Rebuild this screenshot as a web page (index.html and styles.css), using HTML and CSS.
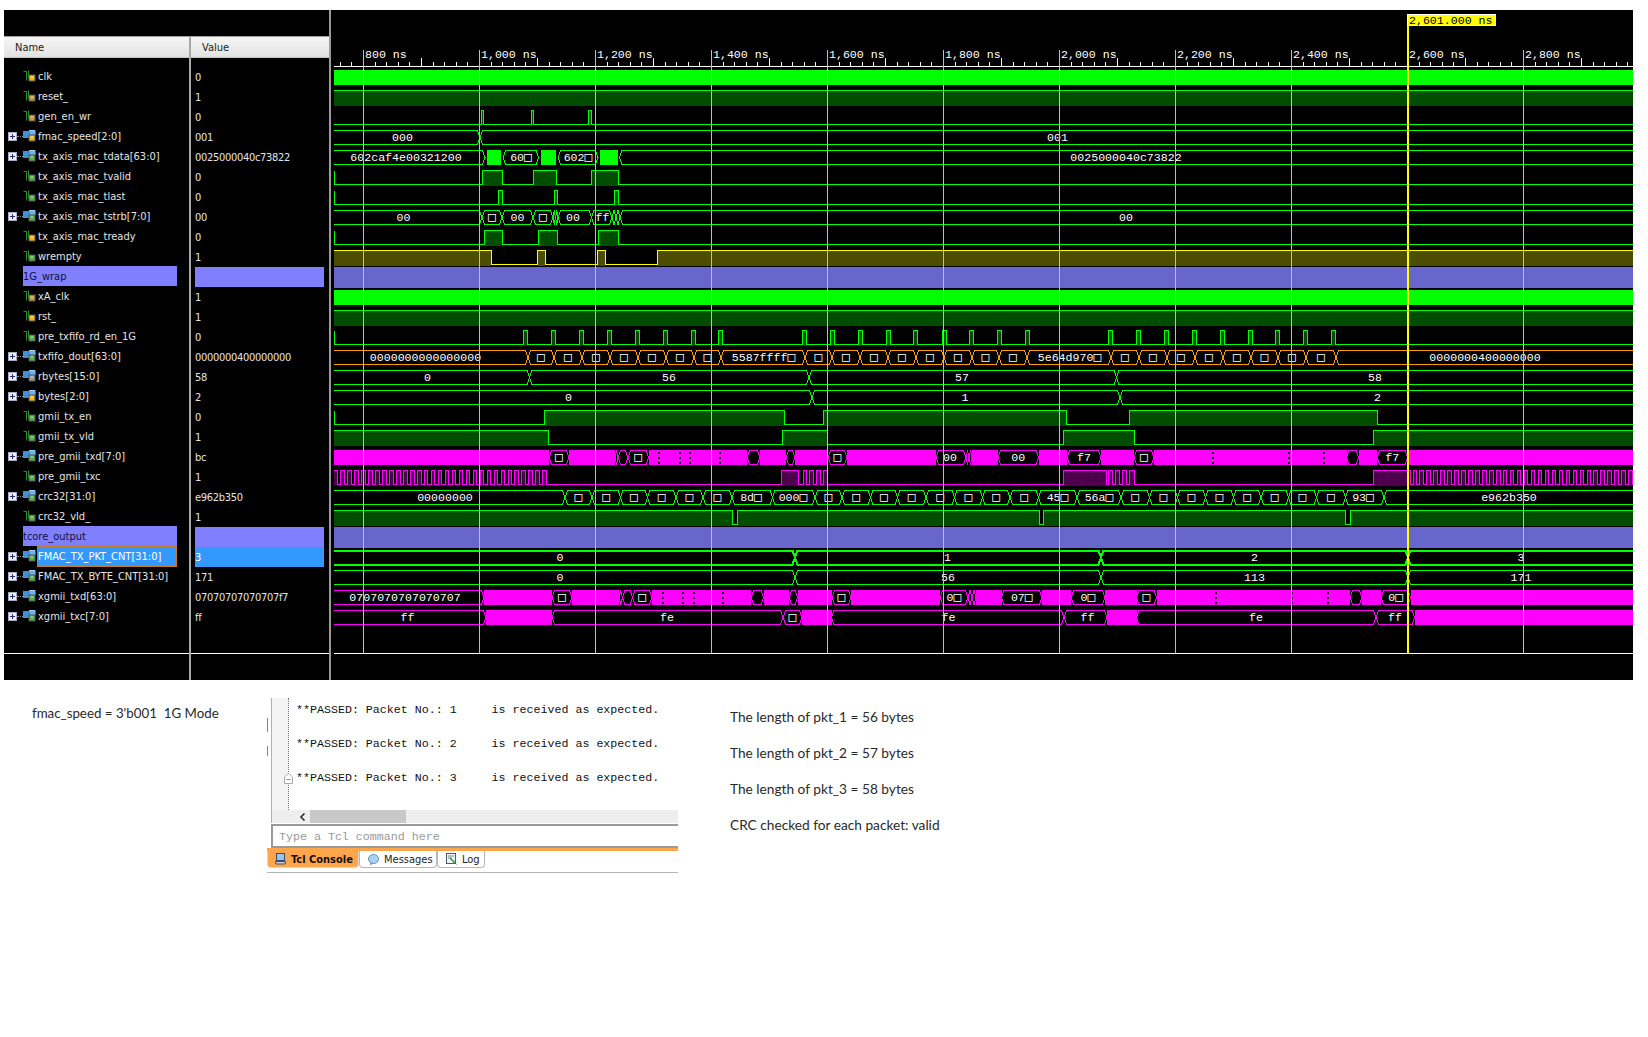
FILE: index.html
```html
<!DOCTYPE html>
<html lang="en">
<head>
    <meta charset="UTF-8">
    <meta name="viewport" content="width=device-width, initial-scale=1.0">
    <title>Waveform - FMAC 1G Mode</title>
    <link rel="stylesheet" href="styles.css">
</head>
<body>
    <svg class="icon-defs" width="0" height="0" aria-hidden="true">
        <symbol id="wire" viewBox="0 0 13 12">
            <path d="M0.5 1.5H3.5V10.5M5.5 0.5V8.5" fill="none" stroke="#2f8f2f"/>
            <rect x="6" y="5" width="6" height="6" fill="currentColor" stroke="#555"/>
            <rect x="7.5" y="6.5" width="3" height="1" fill="#fff" opacity="0.6"/>
        </symbol>
        <symbol id="bus" viewBox="0 0 13 12">
            <rect x="0" y="1" width="7" height="7" fill="#3f8fdc"/>
            <path d="M6 0.5H12V5" fill="none" stroke="#9fd0f5"/>
            <rect x="7" y="1" width="5" height="4" fill="#6cb2ee"/>
            <rect x="6" y="5" width="6" height="6" fill="currentColor" stroke="#555"/>
            <rect x="7.5" y="6.5" width="3" height="1" fill="#fff" opacity="0.6"/>
        </symbol>
        <symbol id="plus-box" viewBox="0 0 9 9">
            <rect x="0.5" y="0.5" width="8" height="8" fill="#ecf0f6" stroke="#aab"/>
            <path d="M2 4.5H7M4.5 2V7" stroke="#1c2f78"/>
        </symbol>
    </svg>

    <div class="wave-window">
        <div class="signal-side">
            <div class="side-top"></div>
            <div class="side-body">
                <div class="name-pane">
                    <div class="pane-head">Name</div>
                    <div class="pane-rows">
                        <div class="sig"><svg class="ico lock-y"><use href="#wire"/></svg><span>clk</span></div>
                        <div class="sig"><svg class="ico lock-o"><use href="#wire"/></svg><span>reset_</span></div>
                        <div class="sig"><svg class="ico lock-o"><use href="#wire"/></svg><span>gen_en_wr</span></div>
                        <div class="sig bus"><svg class="plus"><use href="#plus-box"/></svg><i class="dots"></i><svg class="ico lock-y"><use href="#bus"/></svg><span>fmac_speed[2:0]</span></div>
                        <div class="sig bus"><svg class="plus"><use href="#plus-box"/></svg><i class="dots"></i><svg class="ico lock-g"><use href="#bus"/></svg><span>tx_axis_mac_tdata[63:0]</span></div>
                        <div class="sig"><svg class="ico lock-g"><use href="#wire"/></svg><span>tx_axis_mac_tvalid</span></div>
                        <div class="sig"><svg class="ico lock-g"><use href="#wire"/></svg><span>tx_axis_mac_tlast</span></div>
                        <div class="sig bus"><svg class="plus"><use href="#plus-box"/></svg><i class="dots"></i><svg class="ico lock-g"><use href="#bus"/></svg><span>tx_axis_mac_tstrb[7:0]</span></div>
                        <div class="sig"><svg class="ico lock-y"><use href="#wire"/></svg><span>tx_axis_mac_tready</span></div>
                        <div class="sig"><svg class="ico lock-g"><use href="#wire"/></svg><span>wrempty</span></div>
                        <div class="sig group"><span>1G_wrap</span></div>
                        <div class="sig"><svg class="ico lock-o"><use href="#wire"/></svg><span>xA_clk</span></div>
                        <div class="sig"><svg class="ico lock-y"><use href="#wire"/></svg><span>rst_</span></div>
                        <div class="sig"><svg class="ico lock-g"><use href="#wire"/></svg><span>pre_txfifo_rd_en_1G</span></div>
                        <div class="sig bus"><svg class="plus"><use href="#plus-box"/></svg><i class="dots"></i><svg class="ico lock-g"><use href="#bus"/></svg><span>txfifo_dout[63:0]</span></div>
                        <div class="sig bus"><svg class="plus"><use href="#plus-box"/></svg><i class="dots"></i><svg class="ico lock-s"><use href="#bus"/></svg><span>rbytes[15:0]</span></div>
                        <div class="sig bus"><svg class="plus"><use href="#plus-box"/></svg><i class="dots"></i><svg class="ico lock-y"><use href="#bus"/></svg><span>bytes[2:0]</span></div>
                        <div class="sig"><svg class="ico lock-g"><use href="#wire"/></svg><span>gmii_tx_en</span></div>
                        <div class="sig"><svg class="ico lock-g"><use href="#wire"/></svg><span>gmii_tx_vld</span></div>
                        <div class="sig bus"><svg class="plus"><use href="#plus-box"/></svg><i class="dots"></i><svg class="ico lock-g"><use href="#bus"/></svg><span>pre_gmii_txd[7:0]</span></div>
                        <div class="sig"><svg class="ico lock-g"><use href="#wire"/></svg><span>pre_gmii_txc</span></div>
                        <div class="sig bus"><svg class="plus"><use href="#plus-box"/></svg><i class="dots"></i><svg class="ico lock-g"><use href="#bus"/></svg><span>crc32[31:0]</span></div>
                        <div class="sig"><svg class="ico lock-g"><use href="#wire"/></svg><span>crc32_vld_</span></div>
                        <div class="sig group"><span>tcore_output</span></div>
                        <div class="sig bus selected"><svg class="plus"><use href="#plus-box"/></svg><i class="dots"></i><svg class="ico lock-g"><use href="#bus"/></svg><span>FMAC_TX_PKT_CNT[31:0]</span></div>
                        <div class="sig bus"><svg class="plus"><use href="#plus-box"/></svg><i class="dots"></i><svg class="ico lock-g"><use href="#bus"/></svg><span>FMAC_TX_BYTE_CNT[31:0]</span></div>
                        <div class="sig bus"><svg class="plus"><use href="#plus-box"/></svg><i class="dots"></i><svg class="ico lock-g"><use href="#bus"/></svg><span>xgmii_txd[63:0]</span></div>
                        <div class="sig bus"><svg class="plus"><use href="#plus-box"/></svg><i class="dots"></i><svg class="ico lock-g"><use href="#bus"/></svg><span>xgmii_txc[7:0]</span></div>
                    </div>
                    <div class="pane-foot"></div>
                </div>
                <div class="value-pane">
                    <div class="pane-head">Value</div>
                    <div class="pane-rows">
                        <div class="val">0</div>
                        <div class="val">1</div>
                        <div class="val">0</div>
                        <div class="val">001</div>
                        <div class="val">0025000040c73822</div>
                        <div class="val">0</div>
                        <div class="val">0</div>
                        <div class="val">00</div>
                        <div class="val">0</div>
                        <div class="val">1</div>
                        <div class="val group"></div>
                        <div class="val">1</div>
                        <div class="val">1</div>
                        <div class="val">0</div>
                        <div class="val">0000000400000000</div>
                        <div class="val">58</div>
                        <div class="val">2</div>
                        <div class="val">0</div>
                        <div class="val">1</div>
                        <div class="val">bc</div>
                        <div class="val">1</div>
                        <div class="val">e962b350</div>
                        <div class="val">1</div>
                        <div class="val group"></div>
                        <div class="val selected">3</div>
                        <div class="val">171</div>
                        <div class="val">07070707070707f7</div>
                        <div class="val">ff</div>
                    </div>
                    <div class="pane-foot"></div>
                </div>
            </div>
        </div>
        <div class="sash"></div>
        <svg id="waves" class="wave-pane" viewBox="334 10 1299 670" width="1299" height="670"></svg>
    </div>

    <div class="below">
        <p class="speed-note">fmac_speed = 3'b001&nbsp; 1G Mode</p>

        <div class="console">
            <div class="console-body">
                <div class="gutter-marks"><i></i><i></i></div>
                <div class="gutter-fold">
                    <svg class="fold-mark" width="9" height="11" viewBox="0 0 9 11"><path d="M0.5 4L4.5 0.5L8.5 4V10.5H0.5Z" fill="#fff" stroke="#aaa"/><path d="M2.5 6.5H6.5" stroke="#888"/></svg>
                </div>
                <div class="console-lines">
                    <p>**PASSED: Packet No.: 1     is received as expected.</p>
                    <p>**PASSED: Packet No.: 2     is received as expected.</p>
                    <p>**PASSED: Packet No.: 3     is received as expected.</p>
                </div>
            </div>
            <div class="scrollbar">
                <div class="scroll-left"><svg width="6" height="8" viewBox="0 0 6 8"><path d="M4.5 0.5L1 4L4.5 7.5" fill="none" stroke="#333" stroke-width="1.6"/></svg></div>
                <div class="scroll-thumb"></div>
            </div>
            <div class="tcl-input">Type a Tcl command here</div>
            <div class="tabs">
                <div class="tab active">
                    <svg width="11" height="12" viewBox="0 0 11 12"><rect x="1.5" y="0.5" width="8" height="7" fill="#9cc4ea" stroke="#35506e"/><path d="M0.5 8.5H10.5L10 11H1Z" fill="#c9d3dd" stroke="#35506e"/></svg>
                    <span>Tcl Console</span>
                </div>
                <div class="tab tab-messages">
                    <svg width="11" height="11" viewBox="0 0 11 11"><ellipse cx="5.5" cy="5" rx="5" ry="4.5" fill="#a9d3f5" stroke="#5d8fc4"/><path d="M3 9L2.5 10.5L5 9.3" fill="#a9d3f5" stroke="#5d8fc4"/></svg>
                    <span>Messages</span>
                </div>
                <div class="tab tab-log">
                    <svg width="11" height="12" viewBox="0 0 11 12"><rect x="0.5" y="0.5" width="9" height="10" fill="#eef2f7" stroke="#4a5a70"/><path d="M2 3H8M2 5H6" stroke="#7a8aa0"/><path d="M4 5L9 10" stroke="#2f9e2f" stroke-width="1.6"/><path d="M9 10L10.5 11.5" stroke="#d0342c"/></svg>
                    <span>Log</span>
                </div>
            </div>
        </div>

        <div class="results">
            <p>The length of pkt_1 = 56 bytes</p>
            <p>The length of pkt_2 = 57 bytes</p>
            <p>The length of pkt_3 = 58 bytes</p>
            <p>CRC checked for each packet: valid</p>
        </div>
    </div>

    <script src="script.js"></script>
</body>
</html>
```

FILE: styles.css
```css
body {
    margin: 0;
    padding: 10px 15px 0 4px;
    background-color: #fff;
    font-family: "DejaVu Sans Condensed", "DejaVu Sans", sans-serif;
    font-stretch: condensed;
}
.icon-defs {
    position: absolute;
}
.wave-window {
    display: flex;
    height: 670px;
    background: #000;
}
.signal-side {
    width: 325px;
}
.side-top {
    height: 26px;
}
.side-body {
    display: flex;
}
.name-pane {
    width: 185px;
    border-right: 2px solid #a8a8a8;
}
.value-pane {
    width: 138px;
}
.sash {
    width: 2px;
    margin-right: 3px;
    background: #9a9a9a;
}
.wave-pane {
    display: block;
    shape-rendering: crispEdges;
}
.pane-head {
    height: 20px;
    padding-left: 11px;
    border-top: 1px solid #a0a0a0;
    border-bottom: 1px solid #c4c4c4;
    background: linear-gradient(#f6f6f6, #e2e2e2);
    color: #222;
    font-size: 11px;
    line-height: 22px;
}
.pane-rows {
    margin-top: 8px;
}
.pane-foot {
    height: 26px;
    margin-top: 27px;
    border-top: 1px solid #fff;
}

.sig, .val {
    display: flex;
    align-items: center;
    height: 20px;
    color: #e4e4e4;
    font-size: 11px;
    white-space: nowrap;
}
.sig {
    padding-left: 19px;
    width: 154px;
}
.sig span {
    margin-left: 2px;
}
.ico {
    width: 13px;
    height: 12px;
    margin-top: -1px;
    flex: none;
}
.plus {
    width: 9px;
    height: 9px;
    margin-left: -15px;
    flex: none;
}
.dots {
    width: 6px;
    border-top: 1px dotted #888;
    flex: none;
}
.lock-y { color: #f2b61c; }
.lock-o { color: #c79a3a; }
.lock-g { color: #55b24a; }
.lock-s { color: #9a9a9a; }
.sig.group {
    padding-left: 0;
    margin-left: 19px;
    width: 154px;
    background: #8080ff;
    color: #101040;
}
.sig.group span {
    margin-left: 0;
}
.sig.selected span {
    flex: 1;
    height: 19px;
    margin-left: 1px;
    line-height: 19px;
    background: #3399ff;
    color: #fff;
    border: 1px dotted #c87a20;
}
.val {
    margin-left: 4px;
    width: 129px;
    position: relative;
    top: 1px;
    letter-spacing: -0.3px;
}
.val.group {
    background: #8080ff;
}
.val.selected {
    background: #3399ff;
    color: #fff;
}

.wave-label, .ruler-label, .cursor-label {
    font: 11.6px "Liberation Mono", "DejaVu Sans Mono", monospace;
}
.wave-label {
    fill: #fff;
    text-anchor: middle;
}
.ruler-label {
    fill: #fff;
}
.cursor-label {
    fill: #000;
}
.box {
    font: bold 13px "DejaVu Sans Mono", monospace;
}

.below {
    display: flex;
    align-items: flex-start;
}
.speed-note {
    width: 235px;
    margin: 23px 0 0 28px;
    color: #2a2a2a;
    font-family: Lato, sans-serif;
    font-size: 13.3px;
    line-height: 20px;
}
.console {
    width: 411px;
    margin-top: 18px;
}
.console-body {
    display: flex;
    height: 112px;
}
.gutter-marks {
    width: 4px;
}
.gutter-marks i {
    display: block;
    width: 1px;
    height: 14px;
    margin-top: 20px;
    background: #6a86c8;
}
.gutter-marks i + i {
    height: 10px;
    margin-top: 14px;
}
.gutter-fold {
    position: relative;
    width: 16px;
    border-left: 1px solid #b0b0b0;
    border-right: 1px dotted #777;
    background: #f3f3f3;
}
.fold-mark {
    position: absolute;
    top: 75px;
    right: -5px;
}
.console-lines {
    flex: 1;
    padding: 1px 0 0 7px;
}
.console-lines p {
    margin: 0 0 12px;
    color: #111;
    font: 11.65px/22px "Liberation Mono", monospace;
    white-space: pre;
}
.scrollbar {
    display: flex;
    align-items: stretch;
    height: 13px;
    margin-left: 4px;
    background: #eeeeee;
    border-left: 1px solid #b0b0b0;
}
.scroll-left {
    display: flex;
    align-items: center;
    justify-content: center;
    width: 38px;
    padding-left: 24px;
    box-sizing: border-box;
}
.scroll-thumb {
    width: 96px;
    background: #c8c8c8;
}
.tcl-input {
    height: 20px;
    margin: 1px 0 0 4px;
    padding-left: 6px;
    border: solid #9a9a9a;
    border-width: 2px 0 2px 2px;
    color: #999;
    font: 11.65px/22px "Liberation Mono", monospace;
}
.tabs {
    display: flex;
    align-items: flex-start;
    height: 21px;
    border-top: 3px solid #ffa64d;
    border-bottom: 1px solid #b4b4b4;
}
.tab {
    display: flex;
    align-items: center;
    gap: 5px;
    box-sizing: border-box;
    height: 17px;
    padding-left: 8px;
    border: 1px solid #b8b8b8;
    border-top: 0;
    border-radius: 0 0 4px 4px;
    color: #222;
    font-size: 11px;
    white-space: nowrap;
}
.tab.active {
    width: 92px;
    padding-left: 7px;
    background: #ffa64d;
    border-color: #d9d9d9;
    color: #111;
    font-weight: bold;
}
.tab-messages {
    width: 78px;
}
.tab-log {
    width: 48px;
}
.results {
    margin: 27px 0 0 52px;
    color: #2a2a2a;
    font-family: Lato, sans-serif;
    font-size: 13.7px;
}
.results p {
    margin: 0 0 16px;
    line-height: 20px;
}
```

FILE: script.js
```js
// waveform canvas, coordinates are page pixels (see viewBox on #waves)
var svg = document.getElementById('waves');
var X0 = 334, X1 = 1633;
var GREEN = '#00ff00', DK_GREEN = '#004d00';
var YEL = '#ffff00', DK_YEL = '#4d4d00';
var MAG = '#ff00ff', DK_MAG = '#4d004d';
var ORANGE = '#ff9900';

function add(tag, attrs, text) {
    var el = document.createElementNS('http://www.w3.org/2000/svg', tag);
    for (var k in attrs) el.setAttribute(k, attrs[k]);
    if (text) el.textContent = text;
    svg.appendChild(el);
    return el;
}
function hi(row) { return 70.5 + 20 * row; }
function lo(row) { return hi(row) + 14; }

function band(row) {
    add('rect', { x: X0, y: hi(row) - 0.5, width: X1 - X0, height: 15, fill: GREEN });
}
function group(row) {
    add('rect', { x: X0, y: hi(row) - 3.5, width: X1 - X0, height: 21, fill: '#6666cc' });
}

// highs = list of [from, to]; edge = draw the little start line at X0
function step(row, color, dark, highs, edge) {
    var h = hi(row), l = lo(row);
    var d = edge ? 'M' + X0 + ' ' + h + 'L' + X0 + ' ' + l : 'M' + X0 + ' ' + l;
    highs.forEach(function (s) {
        add('rect', { x: s[0], y: h, width: s[1] - s[0], height: 15.5, fill: dark });
        if (s[0] <= X0) d = 'M' + X0 + ' ' + h;
        else d += 'L' + s[0] + ' ' + l + 'L' + s[0] + ' ' + h;
        d += 'L' + s[1] + ' ' + h;
        if (s[1] < X1) d += 'L' + s[1] + ' ' + l;
    });
    var last = highs.length ? highs[highs.length - 1][1] : X0;
    if (last < X1) d += 'L' + X1 + ' ' + l;
    add('path', { d: d, fill: 'none', stroke: color });
}

// bus label, the missing-glyph box gets drawn bigger like the viewer does it
function label(row, text, x) {
    var el = add('text', { 'class': 'wave-label', x: x, y: hi(row) + 10 });
    text.split('\u25a1').forEach(function (part, i) {
        if (i > 0) {
            var box = document.createElementNS('http://www.w3.org/2000/svg', 'tspan');
            box.setAttribute('class', 'box');
            box.textContent = '\u25a1';
            el.appendChild(box);
        }
        if (part) el.appendChild(document.createTextNode(part));
    });
}

// segs = list of end | [end, label, labelCenter]; '#' is a solid stretch
function bus(row, color, segs, width, edge) {
    var h = hi(row), l = lo(row), m = h + 7, a = X0;
    if (edge) add('path', { d: 'M' + X0 + ' ' + h + 'V' + l, stroke: color });
    segs.forEach(function (s) {
        if (typeof s === 'number') s = [s, '\u25a1'];
        var b = s[0], text = s[1];
        if (text === '#' || text === '##') {
            var inset = text === '##' ? 2 : 0;
            add('rect', { x: a + inset, y: h - 0.5, width: b - a - 2 * inset, height: 15, fill: color });
        } else {
            var t = Math.min(2.5, (b - a) / 2);
            var left = a <= X0 ? [[a, h], [a, l]] : [[a + t, h], [a, m], [a + t, l]];
            var right = b >= X1 ? [[b, h], [b, l]] : [[b - t, h], [b, m], [b - t, l]];
            var pts = [left[0]].concat(right).concat(left.slice(1).reverse());
            add('polygon', { points: pts.map(String).join(' '), fill: '#000', stroke: 'none' });
            var line = 'M' + (a <= X0 ? a + ' ' + h : a + ' ' + m + 'L' + (a + t) + ' ' + h);
            line += 'L' + (b >= X1 ? b : b - t) + ' ' + h;
            if (b < X1) line += 'L' + b + ' ' + m + 'L' + (b - t) + ' ' + l; else line += 'M' + b + ' ' + l;
            line += 'L' + (a <= X0 ? a : a + t) + ' ' + l;
            if (a > X0) line += 'L' + a + ' ' + m;
            add('path', { d: line, fill: 'none', stroke: color, 'stroke-width': width || 1 });
            if (text) label(row, text, s[2] || (a + b) / 2);
        }
        a = b;
    });
}

// tiny black specks the viewer leaves in very dense stretches
function specks(row, list) {
    list.forEach(function (x) {
        [1, 6, 11].forEach(function (dy) {
            add('rect', { x: x, y: hi(row) + dy, width: 2, height: 2, fill: '#000' });
        });
    });
}

function clock(from, to, period) {
    var out = [];
    for (var x = from; x < to - 1; x += period) out.push([x, Math.min(x + period / 2, to)]);
    return out;
}
function pulses(centers) {
    return centers.map(function (c) { return [c - 2, c + 2]; });
}

band(0);
step(1, GREEN, DK_GREEN, [[X0, X1]]);
step(2, GREEN, DK_GREEN, [[481, 483], [531, 533.5], [588.5, 591]]);
bus(3, GREEN, [[480, '000', 402.5], [X1, '001', 1057.5]]);
bus(4, GREEN, [[485, '602caf4e00321200', 406], [503, '##'], [538.5, '60\u25a1', 521], [558, '##'], [598, '602\u25a1', 578], [619.5, '##'], [X1, '0025000040c73822', 1126]]);
step(5, GREEN, DK_GREEN, [[482.5, 502], [533, 556.5], [591.5, 618]], true);
step(6, GREEN, DK_GREEN, [[498.5, 502], [554.5, 557], [614, 618]], true);
bus(7, GREEN, [[482, '00', 403.5], 502, [533, '00'], 553, [555.5, ''], [558, ''], [591.5, '00', 573], [612, 'ff', 602.5], [616, ''], [620, ''], [X1, '00', 1126]]);
step(8, GREEN, DK_GREEN, [[484.5, 502], [538, 557], [598, 618]], true);
step(9, YEL, DK_YEL, [[X0, 491], [537.5, 545], [597, 605], [657, X1]]);
group(10);
band(11);
step(12, GREEN, DK_GREEN, [[X0, X1]]);
step(13, GREEN, DK_GREEN, pulses([525.5, 553.5, 581, 609, 637, 665, 693, 720.5, 804.5, 832, 860, 888, 915.5, 944, 971, 999.5, 1027, 1110.5, 1138.5, 1166.5, 1194.5, 1222.5, 1250.5, 1277.5, 1305.5, 1333.5]), true);
bus(14, ORANGE, [[528, '0000000000000000', 425.5], 554, 582, 610, 638, 666, 694, 721, [805, '5587ffff\u25a1', 763.5], 832, 860, 888, 916, 944, 972, 999, 1027, [1111, '5e64d970\u25a1', 1069.5], 1139, 1167, 1195, 1223, 1251, 1278, 1306, 1336, [X1, '0000000400000000', 1485]]);
bus(15, GREEN, [[529.5, '0', 427.5], [809, '56', 669], [1116.5, '57', 962], [X1, '58', 1375]]);
bus(16, GREEN, [[812, '0', 568.5], [1120, '1', 965], [X1, '2', 1377.5]]);
step(17, GREEN, DK_GREEN, [[544.5, 784.5], [823.5, 1066.5], [1129.5, 1377]], true);
step(18, GREEN, DK_GREEN, [[X0, 548], [782, 827], [1063, 1134], [1373, X1]]);
bus(19, MAG, [[549, '#'], 569, [615, '#'], [618, ''], [628, ''], 648.5, [747, '#'], [760, ''], [786, '#'], [795, ''], [828, '#'], 847, [936, '#'], [966, '00', 950], [969, ''], [972, ''], [998, '#'], [1038.5, '00'], [1067, '#'], [1101, 'f7'], [1134, '#'], 1154, [1346.5, '#'], [1358.5, ''], [1377, '#'], [1407.5, 'f7'], [X1, '#']]);
specks(19, [658, 679, 688.5, 719, 1211.5, 1288, 1323]);
step(20, MAG, DK_MAG, clock(X0, 549, 6.96).concat([[781.5, 798.5], [803, 806.5], [809.5, 813], [816.5, 820], [823, 827], [1063, 1106], [1108, 1112.5], [1115.5, 1119.5], [1122.5, 1126.5], [1129.5, 1134], [1373, 1410]], clock(1413, X1, 6.96)));
bus(21, GREEN, [[565, '00000000', 445], 592, 620.5, 647.5, 676, 703, 732, [772.5, '8d\u25a1', 751], [815, '000\u25a1', 793], 842, 870.5, 897.5, 926, 954.5, 982.5, 1010, 1038.5, [1077, '45\u25a1', 1057.5], [1121, '56a\u25a1', 1099], 1149.5, 1177.5, 1205.5, 1233.5, 1261, 1288.5, 1316.5, 1345.5, [1384, '93\u25a1', 1363], [X1, 'e962b350', 1509]]);
step(22, GREEN, DK_GREEN, [[X0, 732], [737, 1039.5], [1043, 1345.5], [1350, X1]], true);
group(23);
bus(24, GREEN, [[795, '0', 560], [1101, '1', 947.5], [1408, '2', 1254.5], [X1, '3', 1521]], 2);
bus(25, GREEN, [[795, '0', 560], [1101, '56', 948], [1408, '113', 1254.5], [X1, '171', 1521]]);
bus(26, MAG, [[484, '0707070707070707', 405], [552, '#'], 572, [619, '#'], [622.5, ''], [632.5, ''], 652, [751, '#'], [763.5, ''], [789, '#'], [797.5, ''], [832, '#'], 851, [940, '#'], [968, '0\u25a1'], [972, ''], [976, ''], [1001.5, '#'], [1042, '07\u25a1'], [1071, '#'], [1105, '0\u25a1'], [1136.5, '#'], 1156.5, [1350, '#'], [1362, ''], [1381, '#'], [1410.5, '0\u25a1'], [X1, '#']]);
specks(26, [661.5, 682, 693, 722, 1215, 1291, 1326.5]);
bus(27, MAG, [[486, 'ff', 407.5], [552, '#'], [783, 'fe', 667], 802, [831.5, '#'], [1064, 'fe', 948.5], [1107, 'ff', 1087.5], [1136.5, '#'], [1376, 'fe', 1256], [1414.5, 'ff', 1395], [X1, '#']], 1, true);

// ruler: 200 ns = 116 px, ticks every 20 ns
add('path', { d: 'M' + X0 + ' 66.5H' + X1 + 'M' + X0 + ' 653.5H' + X1, stroke: '#fff' });
var d = '';
for (var x = 363 - 2 * 11.6, n = -2; x < X1; x += 11.6, n++) {
    var len = n % 10 === 0 ? 16 : (n % 5 === 0 ? 8 : 4);
    d += 'M' + Math.round(x) + '.5 66V' + (66 - len);
}
add('path', { d: d, stroke: '#fff' });
['800', '1,000', '1,200', '1,400', '1,600', '1,800', '2,000', '2,200', '2,400', '2,600', '2,800'].forEach(function (t, i) {
    var gx = Math.round(363 + 116 * i);
    add('text', { 'class': 'ruler-label', x: gx + 2, y: 58 }, t + ' ns');
    add('path', { d: 'M' + gx + '.5 50V653', stroke: '#bdbdbd' });
});

// cursor
add('rect', { x: 1407, y: 26, width: 2, height: 627, fill: YEL });
add('rect', { x: 1407.5, y: 14.5, width: 88, height: 11, fill: YEL, stroke: '#fff' });
add('text', { 'class': 'cursor-label', x: 1409, y: 24 }, '2,601.000 ns');
```
